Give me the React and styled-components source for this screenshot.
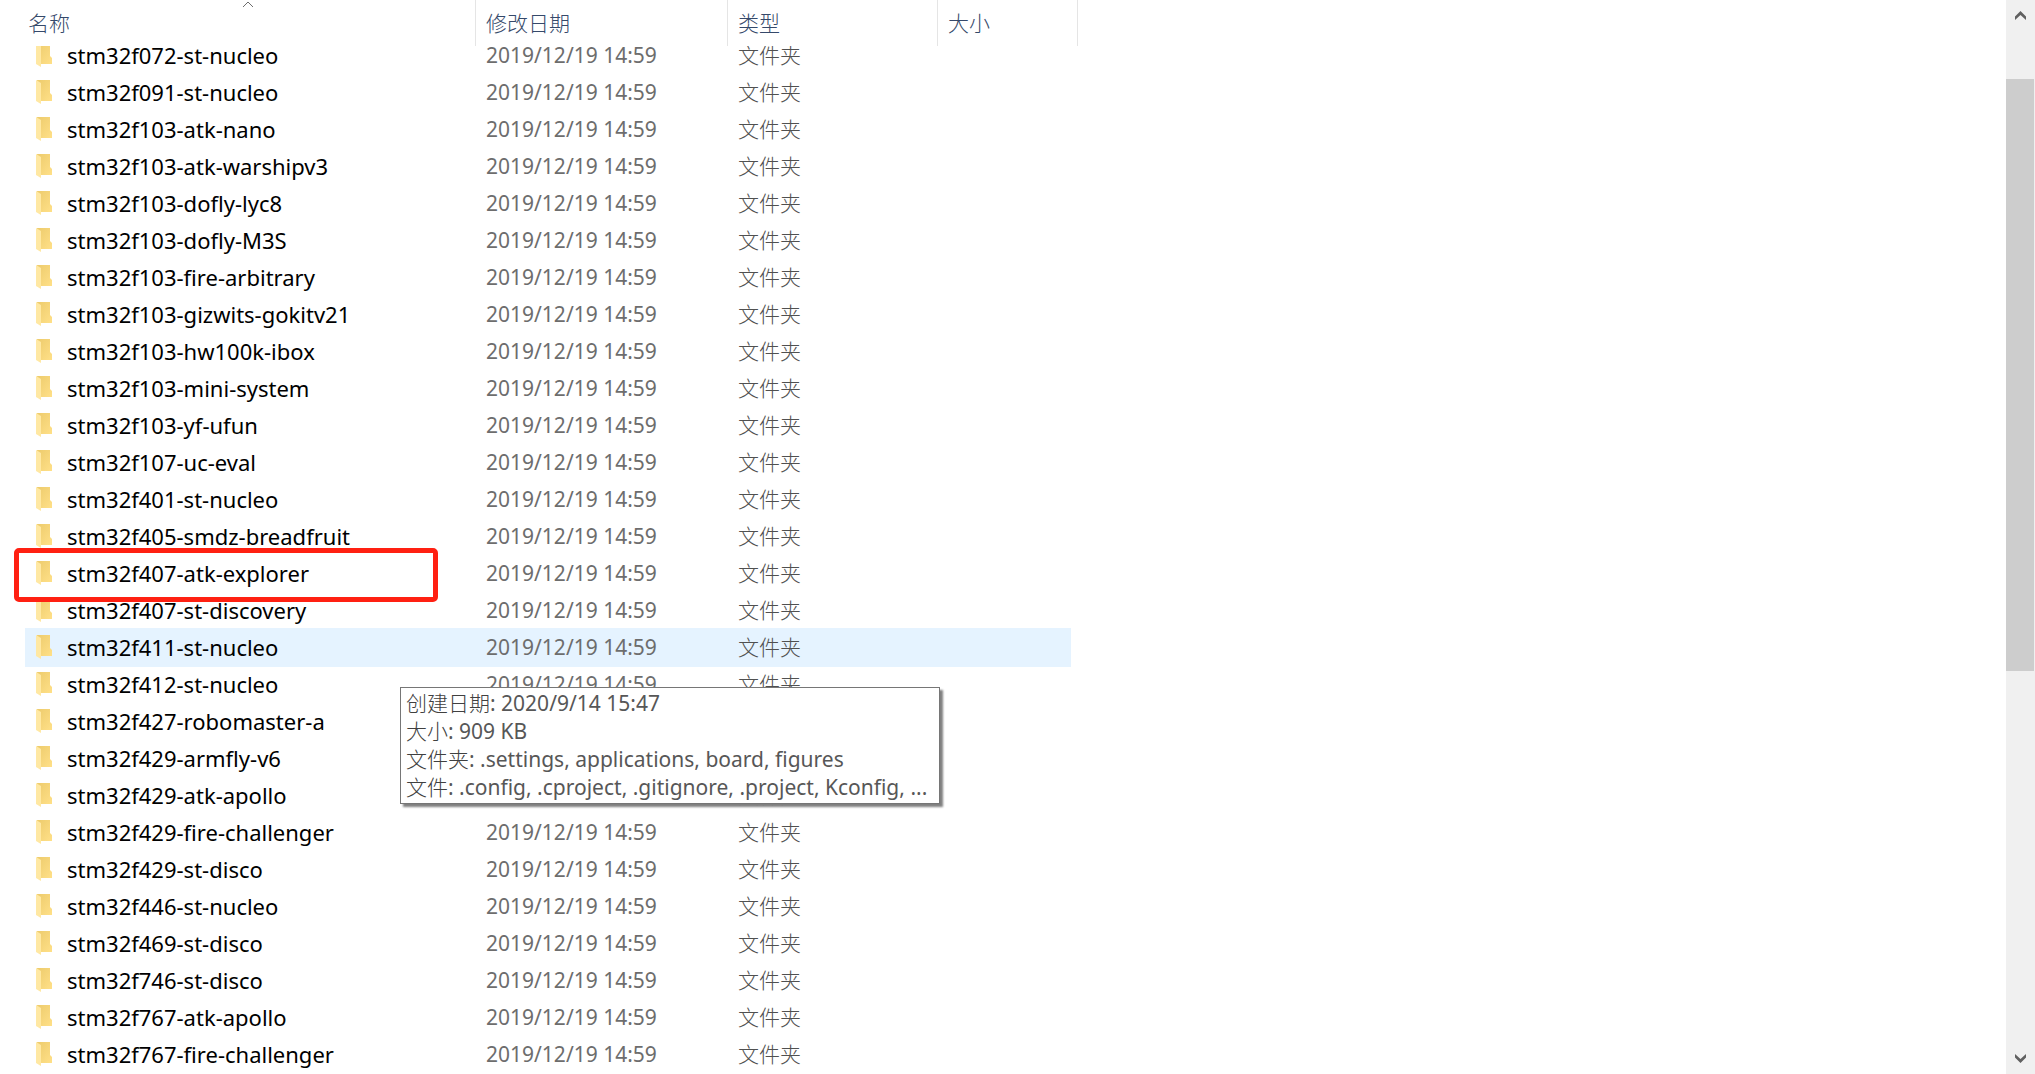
import React from 'react'
import styled, { createGlobalStyle, css } from 'styled-components'

const GlobalStyle = createGlobalStyle`
  * {
    box-sizing: border-box;
  }

  body {
    margin: 0;
    background-color: #ffffff;
    font-family: 'Noto Sans', 'Noto Sans CJK SC', sans-serif;
    font-size: 21px;
    line-height: 28px;
  }

  button {
    border: none;
    padding: 0;
    background: none;
    font: inherit;
    color: inherit;
    cursor: pointer;
  }
`

const Window = styled.div`
  display: flex;
  height: 100vh;
  overflow: hidden;
`

const FileArea = styled.main`
  flex: 1;
  min-width: 0;
  overflow: hidden;
  padding-left: 25px;
`

const FileTable = styled.table`
  display: block;
  text-align: left;
`

const columns = css`
  display: grid;
  grid-template-columns: 450px 252px 210px 141px;
`

const Head = styled.thead`
  display: block;
  position: relative;
  z-index: 1;
  background-color: #ffffff;
`

const HeadRow = styled.tr`
  ${columns}
  height: 46px;
`

const HeadCell = styled.th`
  position: relative;
  padding: 9px 0 0 ${(props) => (props.$first ? '3px' : '10px')};
  border-left: ${(props) => (props.$first ? 'none' : '1px solid #e5e5e5')};
  color: #35496a;
  font-weight: 300;

  &:last-child {
    border-right: 1px solid #e5e5e5;
  }
`

const SortMark = styled.svg`
  position: absolute;
  top: 0;
  left: 50%;
  margin-left: -8px;
`

/* the list is scrolled a little way under the header */
const Body = styled.tbody`
  display: block;
  margin-top: -10px;
`

const Row = styled.tr`
  ${columns}
  position: relative;
  width: 1046px;
  height: 37px;
  align-items: center;

  ${(props) =>
    props.$hovered &&
    css`
      background-color: #e5f3ff;
      box-shadow: 0 2px #e5f3ff;
    `}
`

const NameCell = styled.td`
  display: flex;
  align-items: center;
  gap: 14px;
  padding: 0 0 0 11px;
  color: #000000;
`

const Name = styled.span`
  font-size: 22px;
`

const Cell = styled.td`
  padding: 0 0 0 11px;
  color: ${(props) => (props.$light ? '#505050' : '#6d6d6d')};
  font-weight: ${(props) => (props.$light ? 300 : 400)};
`

const Marker = styled.span`
  position: absolute;
  z-index: 1;
  top: -6px;
  left: -11px;
  width: 424px;
  height: 54px;
  border: 5px solid #ff2012;
  border-radius: 5px;
  pointer-events: none;
`

const Tooltip = styled.div`
  position: absolute;
  z-index: 2;
  top: 59px;
  left: 375px;
  padding: 1px 5px 2px;
  width: 540px;
  border: 1px solid #767676;
  background-color: #ffffff;
  box-shadow: 3px 3px 2px #808080;
  color: #575757;
  white-space: nowrap;

  p {
    margin: 0;
  }
`

const Han = styled.span`
  color: #404040;
  font-weight: 300;
`

const ScrollBar = styled.aside`
  display: flex;
  flex-direction: column;
  width: 29px;
  background-color: #f0f0f0;
`

const ScrollButton = styled.button`
  display: flex;
  align-items: center;
  justify-content: center;
  height: 31px;
`

const Track = styled.div`
  flex: 1;
  display: flex;
  flex-direction: column;
`

const TrackSpace = styled.div`
  flex: ${(props) => props.$size};
`

const Thumb = styled.div`
  flex: 592;
  margin-right: 1px;
  background-color: #cdcdcd;
`

const FolderIcon = () => (
  <svg width="17" height="24" viewBox="0 0 17 24" aria-hidden="true">
    <defs>
      <linearGradient id="back" x1="0" y1="0" x2="1" y2="1">
        <stop offset="0" stopColor="#edcb6c" />
        <stop offset="1" stopColor="#ffe088" />
      </linearGradient>
    </defs>
    <path d="M1 0H14V13L16 15V21H4Z" fill="url(#back)" />
    <path d="M0 0L5 3V24L0 21Z" fill="#ffe8a3" />
  </svg>
)

const Chevron = ({ down }) => (
  <svg width="11" height="9" viewBox="0 0 11 9" aria-hidden="true">
    <path
      d={down ? 'M0 0L5.5 5L11 0V3.5L5.5 9L0 3.5Z' : 'M0 9L5.5 4L11 9V5.5L5.5 0L0 5.5Z'}
      fill="#606060"
    />
  </svg>
)

const folders = [
  'stm32f072-st-nucleo',
  'stm32f091-st-nucleo',
  'stm32f103-atk-nano',
  'stm32f103-atk-warshipv3',
  'stm32f103-dofly-lyc8',
  'stm32f103-dofly-M3S',
  'stm32f103-fire-arbitrary',
  'stm32f103-gizwits-gokitv21',
  'stm32f103-hw100k-ibox',
  'stm32f103-mini-system',
  'stm32f103-yf-ufun',
  'stm32f107-uc-eval',
  'stm32f401-st-nucleo',
  'stm32f405-smdz-breadfruit',
  'stm32f407-atk-explorer',
  'stm32f407-st-discovery',
  'stm32f411-st-nucleo',
  'stm32f412-st-nucleo',
  'stm32f427-robomaster-a',
  'stm32f429-armfly-v6',
  'stm32f429-atk-apollo',
  'stm32f429-fire-challenger',
  'stm32f429-st-disco',
  'stm32f446-st-nucleo',
  'stm32f469-st-disco',
  'stm32f746-st-disco',
  'stm32f767-atk-apollo',
  'stm32f767-fire-challenger',
]

const marked = 'stm32f407-atk-explorer'
const hovered = 'stm32f411-st-nucleo'

const FolderTooltip = () => (
  <Tooltip role="tooltip">
    <p><Han>创建日期</Han>: 2020/9/14 15:47</p>
    <p><Han>大小</Han>: 909 KB</p>
    <p><Han>文件夹</Han>: .settings, applications, board, figures</p>
    <p><Han>文件</Han>: .config, .cproject, .gitignore, .project, Kconfig, ...</p>
  </Tooltip>
)

const App = () => {
  return (
    <Window>
      <GlobalStyle />
      <FileArea>
        <FileTable>
          <Head>
            <HeadRow>
              <HeadCell $first>
                <SortMark width="12" height="8" viewBox="0 0 12 8" aria-hidden="true">
                  <path d="M1 7L6 2L11 7" fill="none" stroke="#6d6d6d" />
                </SortMark>
                <button>名称</button>
              </HeadCell>
              <HeadCell><button>修改日期</button></HeadCell>
              <HeadCell><button>类型</button></HeadCell>
              <HeadCell><button>大小</button></HeadCell>
            </HeadRow>
          </Head>
          <Body>
            {folders.map((name) => (
              <Row key={name} $hovered={name === hovered}>
                <NameCell>
                  <FolderIcon />
                  <Name>{name}</Name>
                  {name === marked && <Marker />}
                  {name === hovered && <FolderTooltip />}
                </NameCell>
                <Cell>2019/12/19 14:59</Cell>
                <Cell $light>文件夹</Cell>
              </Row>
            ))}
          </Body>
        </FileTable>
      </FileArea>
      <ScrollBar>
        <ScrollButton aria-label="向上滚动"><Chevron /></ScrollButton>
        <Track>
          <TrackSpace $size={48} />
          <Thumb />
          <TrackSpace $size={372} />
        </Track>
        <ScrollButton aria-label="向下滚动"><Chevron down /></ScrollButton>
      </ScrollBar>
    </Window>
  )
}

export default App
